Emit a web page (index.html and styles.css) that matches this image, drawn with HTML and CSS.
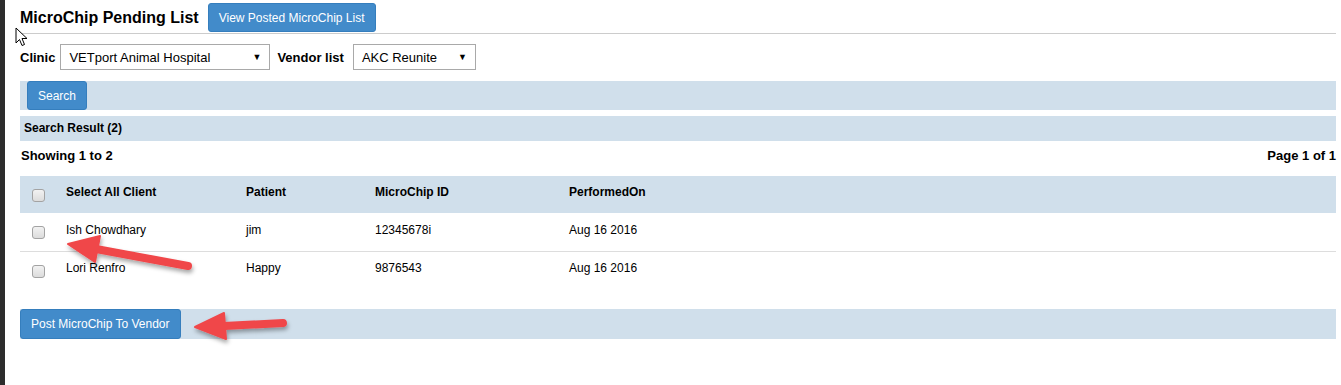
FILE: index.html
```html
<!DOCTYPE html>
<html lang="en">
<head>
    <meta charset="UTF-8">
    <title>MicroChip Pending List</title>
    <link rel="stylesheet" href="styles.css">
</head>
<body>
    <div class="page">
        <div class="title-row">
            <h1>MicroChip Pending List</h1>
            <button class="btn">View Posted MicroChip List</button>
        </div>

        <div class="filter-row">
            <label class="field-label">Clinic</label>
            <div class="select-box clinic">
                <span>VETport Animal Hospital</span>
                <span class="caret">&#9660;</span>
            </div>
            <label class="field-label vendor-label">Vendor list</label>
            <div class="select-box vendor">
                <span>AKC Reunite</span>
                <span class="caret">&#9660;</span>
            </div>
        </div>

        <div class="bar search-bar">
            <button class="btn btn-search">Search</button>
        </div>

        <div class="bar result-bar">Search Result (2)</div>

        <div class="paging">
            <span>Showing 1 to 2</span>
            <span>Page 1 of 1</span>
        </div>

        <table class="grid">
            <colgroup>
                <col style="width: 38px">
                <col style="width: 180px">
                <col style="width: 129px">
                <col style="width: 194px">
                <col>
            </colgroup>
            <thead>
                <tr>
                    <th class="check"><input type="checkbox"></th>
                    <th>Select All Client</th>
                    <th>Patient</th>
                    <th>MicroChip ID</th>
                    <th>PerformedOn</th>
                </tr>
            </thead>
            <tbody>
                <tr>
                    <td class="check"><input type="checkbox"></td>
                    <td>Ish Chowdhary</td>
                    <td>jim</td>
                    <td>12345678i</td>
                    <td>Aug 16 2016</td>
                </tr>
                <tr>
                    <td class="check"><input type="checkbox"></td>
                    <td>Lori Renfro</td>
                    <td>Happy</td>
                    <td>9876543</td>
                    <td>Aug 16 2016</td>
                </tr>
            </tbody>
        </table>

        <div class="bar post-bar">
            <button class="btn btn-post">Post MicroChip To Vendor</button>
        </div>
    </div>

    <!-- mouse pointer left in the screenshot -->
    <svg class="pointer" width="14" height="20" viewBox="0 0 14 20">
        <path d="M1 1 L1 16 L4.5 12.5 L7 18.5 L9.5 17.5 L7 11.5 L12 11.5 Z" fill="#fff" stroke="#000" stroke-width="1" stroke-linejoin="round"/>
    </svg>

    <!-- red annotation arrows -->
    <svg class="marks" width="1341" height="385">
        <defs>
            <filter id="shade" x="-20%" y="-20%" width="140%" height="160%">
                <feDropShadow dx="1" dy="3" stdDeviation="2" flood-color="#000" flood-opacity="0.35"/>
            </filter>
        </defs>
        <g filter="url(#shade)" fill="#f0474a" stroke="#f0474a">
            <line x1="96" y1="249" x2="188" y2="266" stroke-width="8" stroke-linecap="round"/>
            <polygon points="68,244 100,236 95,262" stroke-width="2" stroke-linejoin="round"/>
            <line x1="224" y1="326" x2="283" y2="323" stroke-width="8" stroke-linecap="round"/>
            <polygon points="195,327 224,313 226,339" stroke-width="2" stroke-linejoin="round"/>
        </g>
    </svg>
</body>
</html>
```

FILE: styles.css
```css
body {
    margin: 0;
    border-left: 5px solid #2d2d2d;
    min-height: 385px;
    box-sizing: border-box;
    font-family: "Liberation Sans", Arial, sans-serif;
    font-size: 12px;
    color: #000;
    background-color: #fff;
}

.page {
    padding: 0 5px 0 15px;
}

.title-row {
    display: flex;
    align-items: center;
    gap: 9px;
    padding: 3px 0 1px;
    border-bottom: 1px solid #cccccc;
}

.title-row h1 {
    margin: 0;
    font-size: 16px;
    font-weight: bold;
}

.btn {
    font-family: "Liberation Sans", Arial, sans-serif;
    font-size: 12px;
    color: #fff;
    background-color: #428bca;
    border: 1px solid #357ebd;
    border-radius: 3px;
    height: 29px;
    padding: 0 10px;
    cursor: pointer;
}

.btn-search {
    width: 60px;
    padding: 0;
}

.btn-post {
    height: 30px;
    padding: 0 10px;
}

.filter-row {
    display: flex;
    align-items: center;
    margin-top: 10px;
    height: 26px;
}

.field-label {
    font-size: 13px;
    font-weight: bold;
    margin-right: 5px;
}

.vendor-label {
    margin-right: 9px;
}

.select-box {
    display: flex;
    align-items: center;
    justify-content: space-between;
    box-sizing: border-box;
    height: 26px;
    padding: 0 8px 0 8px;
    border: 1px solid #a9a9a9;
    font-size: 13px;
    margin-right: 7px;
}

.select-box.clinic {
    width: 210px;
}

.select-box.vendor {
    width: 123px;
}

.caret {
    font-size: 9px;
}

.bar {
    background-color: #d0dfeb;
}

.search-bar {
    margin-top: 11px;
    height: 29px;
    padding-left: 7px;
}

.result-bar {
    margin-top: 6px;
    height: 25px;
    line-height: 25px;
    padding-left: 4px;
    font-weight: bold;
}

.paging {
    display: flex;
    justify-content: space-between;
    align-items: center;
    height: 29px;
    font-size: 13px;
    font-weight: bold;
    padding-left: 1px;
}

.grid {
    width: 100%;
    margin-top: 6px;
    border-collapse: collapse;
    table-layout: fixed;
}

.grid th,
.grid td {
    text-align: left;
    padding: 8px 8px 12px;
    line-height: 17px;
    vertical-align: middle;
}

.grid thead tr {
    background-color: #d0dfeb;
}

.grid td {
    border-top: 1px solid #dddddd;
}

.grid tbody tr:first-child td {
    border-top: none;
    padding-top: 9px;
}

.grid .check {
    padding-left: 12px;
    padding-right: 0;
    padding-top: 11px;
    padding-bottom: 9px;
}

input[type="checkbox"] {
    appearance: none;
    -webkit-appearance: none;
    display: block;
    width: 13px;
    height: 13px;
    margin: 0;
    border: 1px solid #a3a3a3;
    border-radius: 3px;
    background: linear-gradient(#f2f2f2, #dcdcdc);
    box-sizing: border-box;
}

.post-bar {
    margin-top: 20px;
    height: 30px;
}

.pointer {
    position: absolute;
    left: 15px;
    top: 27px;
}

.marks {
    position: absolute;
    left: 0;
    top: 0;
    pointer-events: none;
}
```
